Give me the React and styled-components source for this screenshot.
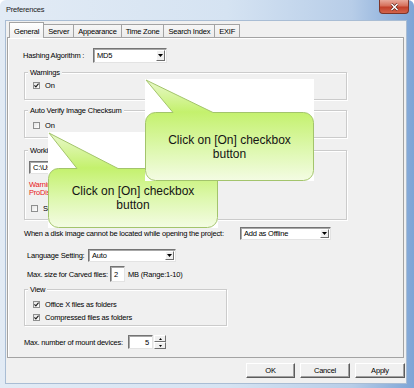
import React from "react";
import styled, { createGlobalStyle } from "styled-components";

const FONT = `"Liberation Sans", Arial, sans-serif`;

const GlobalStyle = createGlobalStyle`
  html, body {
    margin: 0;
    padding: 0;
    background: #ffffff;
  }
  body {
    font-family: ${FONT};
  }
`;

const Window = styled.div`
  position: relative;
  width: 414px;
  height: 388px;
  display: flex;
  flex-direction: column;
  border-radius: 6px 6px 0 0;
  background: linear-gradient(90deg, #e2ebf5 0%, #d5e3f2 55%, #b7cde8 85%, #7ea5d6 100%);
  font-family: ${FONT};
  font-size: 7.5px;
  letter-spacing: -0.2px;
  color: #000;
  overflow: hidden;
`;

const TitleBar = styled.div`
  height: 20px;
  display: flex;
  align-items: flex-start;
  justify-content: space-between;
  padding-left: 6px;
  flex-shrink: 0;
`;

const Title = styled.span`
  line-height: 19px;
  font-size: 7.5px;
  color: #1b1b1b;
`;

const CloseButton = styled.div`
  width: 30px;
  height: 14px;
  margin-right: 5px;
  box-sizing: border-box;
  border: 1px solid #7d3529;
  border-top: none;
  border-radius: 0 0 4px 4px;
  background: linear-gradient(#e8a99b 0%, #d6705b 45%, #c2402a 55%, #d2644c 100%);
  display: flex;
  align-items: center;
  justify-content: center;
`;

const Client = styled.div`
  flex: 1;
  margin: 0 7px 4px 5px;
  display: flex;
  flex-direction: column;
  background: #f0f0f0;
  border: 1px solid #a9bdd4;
`;

const TabRow = styled.div`
  display: flex;
  align-items: flex-end;
  height: 16px;
  margin-top: 1px;
  padding-left: 4px;
  position: relative;
  z-index: 1;
`;

const Tab = styled.div`
  box-sizing: border-box;
  height: ${(p) => (p.$active ? 16 : 14)}px;
  padding: ${(p) => (p.$active ? 1 : 0)}px 4px 0;
  margin-left: -1px;
  border: 1px solid #a3a3a3;
  border-bottom: ${(p) => (p.$active ? "none" : "1px solid #a3a3a3")};
  background: ${(p) =>
    p.$active ? "linear-gradient(#ffffff, #f0f0f0)" : "linear-gradient(#f6f6f6, #ececec)"};
  display: flex;
  align-items: center;
  white-space: nowrap;
`;

const Panel = styled.div`
  box-sizing: border-box;
  height: 321px;
  margin: -1px 2px 0 1px;
  border: 1px solid #a3a3a3;
  box-shadow: inset 1px 1px 0 #ffffff;
  background: #f0f0f0;
  display: flex;
  flex-direction: column;
`;

const Row = styled.div`
  display: flex;
  align-items: center;
  height: ${(p) => p.$h}px;
  margin-top: ${(p) => p.$mt}px;
  padding-left: ${(p) => p.$pl}px;
`;

const Label = styled.span`
  white-space: nowrap;
  width: ${(p) => (p.$w ? `${p.$w}px` : "auto")};
  margin-left: ${(p) => p.$ml || 0}px;
  flex-shrink: 0;
`;

const Sunken = styled.div`
  box-sizing: border-box;
  width: ${(p) => p.$w}px;
  height: ${(p) => p.$h}px;
  background: #ffffff;
  border: 1px solid;
  border-color: #747474 #e3e3e3 #e3e3e3 #747474;
  box-shadow: inset 1px 1px 0 #a8a8a8;
  display: flex;
  align-items: center;
  justify-content: ${(p) => (p.$right ? "flex-end" : "flex-start")};
  padding: 0 ${(p) => (p.$right ? 3 : 0)}px 0 ${(p) => (p.$right ? 0 : 3)}px;
  overflow: hidden;
  white-space: nowrap;
`;

const SelectBox = styled(Sunken)`
  padding-right: 0;
`;

const SelectText = styled.span`
  flex: 1;
`;

const DropButton = styled.div`
  width: 9px;
  align-self: stretch;
  margin: 1px 1px 1px 0;
  box-sizing: border-box;
  background: #f0f0f0;
  border: 1px solid;
  border-color: #ffffff #6e6e6e #6e6e6e #ffffff;
  display: flex;
  align-items: center;
  justify-content: center;
`;

const Group = styled.div`
  position: relative;
  box-sizing: border-box;
  width: ${(p) => p.$w}px;
  height: ${(p) => p.$h}px;
  margin: ${(p) => p.$mt}px 0 0 16px;
  padding: ${(p) => p.$pt}px 0 0 ${(p) => p.$pl}px;
  border: 1px solid #cbcbcb;
  box-shadow: inset 1px 1px 0 #ffffff, 1px 1px 0 #ffffff;
  display: flex;
  flex-direction: column;
  gap: ${(p) => p.$gap || 0}px;
`;

const Legend = styled.span`
  position: absolute;
  top: -5px;
  left: 3px;
  padding: 0 2px;
  line-height: 9px;
  background: #f0f0f0;
  white-space: nowrap;
`;

const CheckRow = styled.div`
  display: flex;
  align-items: center;
  gap: 5px;
  height: 9px;
  margin: ${(p) => p.$mt || 0}px 0 0 ${(p) => p.$ml || 0}px;
  white-space: nowrap;
`;

const Box = styled.div`
  width: 7px;
  height: 7px;
  box-sizing: border-box;
  border: 1px solid #8e8f8f;
  background: linear-gradient(135deg, #e4e4e4, #ffffff);
  display: flex;
  align-items: center;
  justify-content: center;
`;

const WarnText = styled.div`
  margin-top: 7px;
  color: #e81818;
  line-height: 8px;
  white-space: nowrap;
`;

const Spinner = styled.div`
  width: 12px;
  height: 14px;
  margin-left: 1px;
  display: flex;
  flex-direction: column;
`;

const SpinHalf = styled.div`
  flex: 1;
  box-sizing: border-box;
  background: #f0f0f0;
  border: 1px solid;
  border-color: #ffffff #707070 #707070 #ffffff;
  display: flex;
  align-items: center;
  justify-content: center;
`;

const Footer = styled.div`
  display: flex;
  justify-content: flex-end;
  gap: 5px;
  padding: 5px 1px 0 0;
`;

const PushButton = styled.div`
  box-sizing: border-box;
  width: ${(p) => p.$w}px;
  height: 15px;
  background: #f0f0f0;
  border: 1px solid;
  border-color: #ffffff #5c5c5c #5c5c5c #ffffff;
  box-shadow: inset -1px -1px 0 #a0a0a0;
  display: flex;
  align-items: center;
  justify-content: center;
`;

const Callout = styled.div`
  position: absolute;
  left: ${(p) => p.$x}px;
  top: ${(p) => p.$y}px;
  width: ${(p) => p.$w}px;
  height: ${(p) => p.$h}px;
  background: #ffffff;
  display: flex;
  flex-direction: column;
  font-family: ${FONT};
  letter-spacing: 0;
`;

const BubbleArt = styled.svg`
  position: absolute;
  left: 0;
  top: 0;
`;

const BubbleText = styled.div`
  position: relative;
  margin-top: ${(p) => p.$top}px;
  height: ${(p) => p.$bh}px;
  display: flex;
  flex-direction: column;
  align-items: center;
  justify-content: center;
  font-size: 12px;
  line-height: 14px;
  color: #141414;
  text-align: center;
`;

function Check({ on }) {
  return (
    <Box>
      {on && (
        <svg width="5" height="5" viewBox="0 0 5 5">
          <path d="M0.4 2.4 L1.9 3.9 L4.6 0.6" fill="none" stroke="#1e1e1e" strokeWidth="1.2" />
        </svg>
      )}
    </Box>
  );
}

function Arrow() {
  return (
    <svg width="5" height="3" viewBox="0 0 5 3">
      <path d="M0 0 H5 L2.5 3 Z" fill="#000" />
    </svg>
  );
}

function Select({ w, h, value }) {
  return (
    <SelectBox $w={w} $h={h}>
      <SelectText>{value}</SelectText>
      <DropButton>
        <Arrow />
      </DropButton>
    </SelectBox>
  );
}

function Bubble({ x, y, w, h, top, tipBase }) {
  const r = 10;
  const b = h - 0.5;
  const R = w - 0.5;
  const t = top + 0.5;
  const d = `M${0.5 + r} ${t} H${tipBase[0]} L1 1 L${tipBase[1]} ${t} H${R - r} A${r} ${r} 0 0 1 ${R} ${t + r} V${b - r} A${r} ${r} 0 0 1 ${R - r} ${b} H${0.5 + r} A${r} ${r} 0 0 1 0.5 ${b - r} V${t + r} A${r} ${r} 0 0 1 ${0.5 + r} ${t} Z`;
  const id = `g${x}${y}`;
  return (
    <Callout $x={x} $y={y} $w={w} $h={h}>
      <BubbleArt width={w} height={h}>
        <defs>
          <linearGradient id={id} x1="0" y1="0" x2="0" y2={h} gradientUnits="userSpaceOnUse">
            <stop offset="0" stopColor="#eaf8cf" />
            <stop offset={top / h} stopColor="#c4f16d" />
            <stop offset="0.7" stopColor="#def8b0" />
            <stop offset="1" stopColor="#f4fce4" />
          </linearGradient>
        </defs>
        <path d={d} fill={`url(#${id})`} stroke="#a3c46c" strokeWidth="1" />
      </BubbleArt>
      <BubbleText $top={top} $bh={h - top}>
        <span>Click on [On] checkbox</span>
        <span>button</span>
      </BubbleText>
    </Callout>
  );
}

export default function App() {
  return (
    <>
      <GlobalStyle />
      <Window>
        <TitleBar>
          <Title>Preferences</Title>
          <CloseButton>
            <svg width="9" height="8" viewBox="0 0 9 8">
              <path d="M1.5 1 L7.5 7 M7.5 1 L1.5 7" stroke="#5a1d14" strokeWidth="2.6" />
              <path d="M1.5 1 L7.5 7 M7.5 1 L1.5 7" stroke="#ffffff" strokeWidth="1.5" />
            </svg>
          </CloseButton>
        </TitleBar>
        <Client>
          <TabRow>
            <Tab $active>General</Tab>
            <Tab>Server</Tab>
            <Tab>Appearance</Tab>
            <Tab>Time Zone</Tab>
            <Tab>Search Index</Tab>
            <Tab>EXIF</Tab>
          </TabRow>
          <Panel>
            <Row $h={15} $mt={10} $pl={15}>
              <Label $w={70}>Hashing Algorithm :</Label>
              <Select w={74} h={15} value="MD5" />
            </Row>

            <Group $w={323} $h={28} $mt={9} $pt={8} $pl={8}>
              <Legend>Warnings</Legend>
              <CheckRow>
                <Check on />
                <span>On</span>
              </CheckRow>
            </Group>

            <Group $w={323} $h={28} $mt={10} $pt={10} $pl={8}>
              <Legend>Auto Verify Image Checksum</Legend>
              <CheckRow>
                <Check />
                <span>On</span>
              </CheckRow>
            </Group>

            <Group $w={323} $h={70} $mt={12} $pt={10} $pl={4}>
              <Legend>Working Folder</Legend>
              <Sunken $w={270} $h={13}>C:\Users\Public</Sunken>
              <WarnText>
                Warning:
                <br />
                ProDiscover
              </WarnText>
              <CheckRow $mt={7} $ml={2}>
                <Check />
                <span>Set as default</span>
              </CheckRow>
            </Group>

            <Row $h={13} $mt={7} $pl={16}>
              <Label $w={216}>When a disk image cannot be located while opening the project:</Label>
              <Select w={91} h={13} value="Add as Offline" />
            </Row>

            <Row $h={13} $mt={9} $pl={19}>
              <Label $w={61}>Language Setting:</Label>
              <Select w={88} h={13} value="Auto" />
            </Row>

            <Row $h={16} $mt={4} $pl={19}>
              <Label $w={83}>Max. size for Carved files:</Label>
              <Sunken $w={15} $h={16}>2</Sunken>
              <Label $ml={3}>MB (Range:1-10)</Label>
            </Row>

            <Group $w={203} $h={37} $mt={7} $pt={10} $pl={8} $gap={4}>
              <Legend>View</Legend>
              <CheckRow>
                <Check on />
                <span>Office X files as folders</span>
              </CheckRow>
              <CheckRow>
                <Check on />
                <span>Compressed files as folders</span>
              </CheckRow>
            </Group>

            <Row $h={14} $mt={9} $pl={16}>
              <Label $w={104}>Max. number of mount devices:</Label>
              <Sunken $w={25} $h={14} $right>
                5
              </Sunken>
              <Spinner>
                <SpinHalf>
                  <svg width="3" height="2" viewBox="0 0 3 2">
                    <path d="M0 2 H3 L1.5 0 Z" fill="#000" />
                  </svg>
                </SpinHalf>
                <SpinHalf>
                  <svg width="3" height="2" viewBox="0 0 3 2">
                    <path d="M0 0 H3 L1.5 2 Z" fill="#000" />
                  </svg>
                </SpinHalf>
              </Spinner>
            </Row>
          </Panel>
          <Footer>
            <PushButton $w={49}>OK</PushButton>
            <PushButton $w={50}>Cancel</PushButton>
            <PushButton $w={50}>Apply</PushButton>
          </Footer>
        </Client>

        <Bubble x={48} y={132} w={170} h={96} top={36} tipBase={[29, 70]} />
        <Bubble x={145} y={79} w={169} h={102} top={33} tipBase={[28, 68]} />
      </Window>
    </>
  );
}
